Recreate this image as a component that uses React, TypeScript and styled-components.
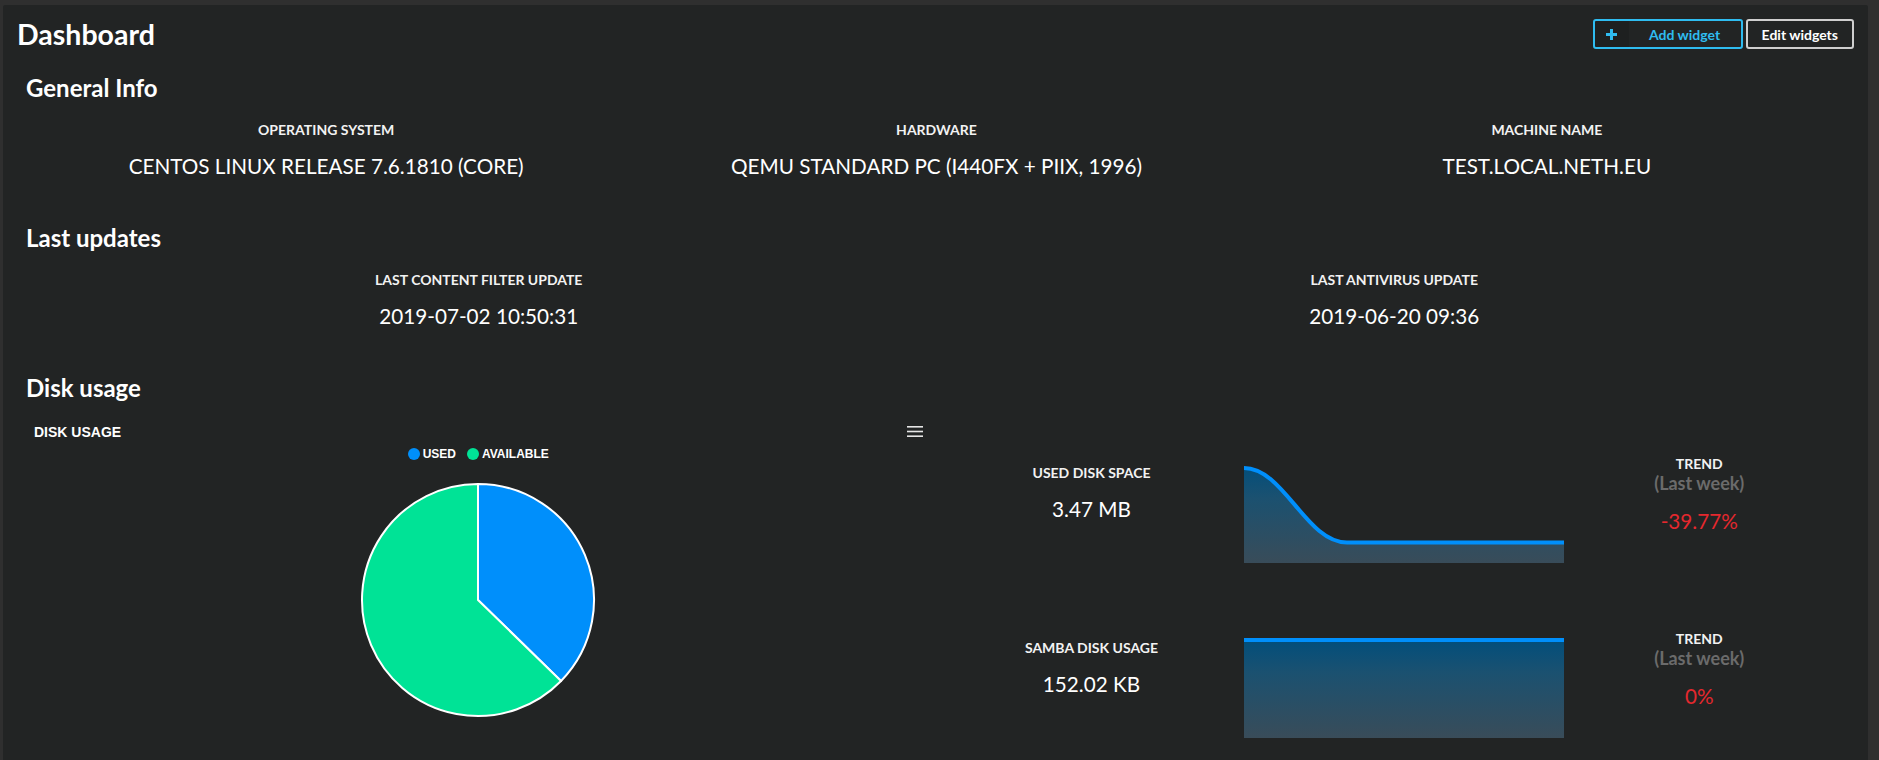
import React from "react";
import styled, { createGlobalStyle } from "styled-components";

const GlobalStyle = createGlobalStyle`
  html, body {
    margin: 0;
    padding: 0;
    height: 100%;
    overflow: hidden;
    background: #2f2f2f;
  }
  body {
    font-family: "Lato", "Liberation Sans", sans-serif;
    color: #ffffff;
  }
  #root { height: 100%; }
  * { box-sizing: border-box; }
`;

const Page = styled.div`
  height: 100vh;
  padding: 5px 11px 0 3px;
`;

const Panel = styled.main`
  height: 100%;
  background: #222424;
  border-radius: 2px 2px 0 0;
  overflow: hidden;
`;

const Header = styled.header`
  display: flex;
  align-items: center;
  justify-content: space-between;
  padding: 12px 14px 0 14px;
`;

const PageTitle = styled.h1`
  margin: 0;
  font-size: 28.5px;
  line-height: 34px;
  font-weight: 700;
  color: #ffffff;
`;

const Actions = styled.div`
  display: flex;
  gap: 3px;
`;

const AddButton = styled.button`
  display: flex;
  align-items: stretch;
  width: 150px;
  height: 30px;
  padding: 0;
  border: 2px solid #2fbcf0;
  border-radius: 3px;
  background: transparent;
  color: #2fbcf0;
  font-family: inherit;
  font-size: 14px;
  font-weight: 700;
  overflow: hidden;
  cursor: pointer;
`;

const IconCell = styled.span`
  width: 34px;
  display: flex;
  align-items: center;
  justify-content: center;
  background: rgba(0, 0, 0, 0.1);
`;

const ButtonLabel = styled.span`
  flex: 1;
  display: flex;
  align-items: center;
  justify-content: center;
`;

const EditButton = styled.button`
  height: 30px;
  padding: 0 14px;
  border: 2px solid #cfcfcf;
  border-radius: 3px;
  background: transparent;
  color: #ffffff;
  font-family: inherit;
  font-size: 14px;
  font-weight: 700;
  cursor: pointer;
`;

const Content = styled.div`
  padding: 0 16px 0 18px;
`;

const Section = styled.section<{ $top: number }>`
  margin-top: ${(p) => p.$top}px;
`;

const SectionTitle = styled.h2`
  margin: 0 0 19px 5px;
  font-size: 24px;
  line-height: 29px;
  font-weight: 700;
  color: #ffffff;
`;

const InfoGrid = styled.div<{ $cols: number }>`
  display: grid;
  grid-template-columns: repeat(${(p) => p.$cols}, minmax(0, 1fr));
`;

const InfoItem = styled.div`
  text-align: center;
`;

const Label = styled.div`
  font-size: 14px;
  line-height: 17px;
  font-weight: 700;
  color: #f2f2f2;
  text-transform: uppercase;
`;

const Value = styled.div`
  margin-top: 16px;
  font-size: 20.7px;
  line-height: 24px;
  font-weight: 400;
  color: #ffffff;
`;

const DiskRow = styled.div`
  display: grid;
  grid-template-columns: minmax(0, 1fr) minmax(0, 1fr);
`;

const ChartCard = styled.div`
  padding: 1px 14px 0 13px;
  font-family: "Liberation Sans", Helvetica, Arial, sans-serif;
`;

const ChartHeader = styled.div`
  display: flex;
  justify-content: space-between;
  align-items: flex-start;
  height: 20px;
`;

const ChartTitle = styled.div`
  font-size: 14px;
  line-height: 20px;
  font-weight: 700;
  color: #ffffff;
`;

const MenuIcon = styled.svg`
  margin-top: 4px;
  display: block;
`;

const Legend = styled.div`
  display: flex;
  justify-content: center;
  gap: 11px;
  margin-top: 4px;
  height: 16px;
`;

const LegendItem = styled.span`
  display: inline-flex;
  align-items: center;
  gap: 3px;
  font-size: 12px;
  line-height: 16px;
  font-weight: 700;
  color: #ffffff;
`;

const LegendDot = styled.span<{ $color: string }>`
  width: 12px;
  height: 12px;
  border-radius: 50%;
  background: ${(p) => p.$color};
`;

const PieWrap = styled.div`
  display: flex;
  justify-content: center;
  margin-top: 20px;
`;

const StatsColumn = styled.div`
  padding-top: 34px;
`;

const StatRow = styled.div`
  display: grid;
  grid-template-columns: 310px 300px minmax(0, 1fr);
  height: 175px;
  align-items: start;
`;

const StatBlock = styled.div`
  text-align: center;
  padding-top: 9px;
`;

const Sparkline = styled.svg`
  display: block;
  margin: 8px 0 0 -3px;
  overflow: visible;
`;

const TrendBlock = styled.div`
  text-align: center;
`;

const TrendTitle = styled.div`
  font-size: 14px;
  line-height: 17px;
  font-weight: 700;
  color: #f2f2f2;
`;

const TrendSub = styled.div`
  font-size: 18px;
  line-height: 22px;
  font-weight: 700;
  color: #6b6b6b;
`;

const TrendValue = styled.div`
  margin-top: 15px;
  font-size: 20.7px;
  line-height: 24px;
  color: #e5282e;
`;

const BLUE = "#008ffb";
const GREEN = "#00e396";

function Pie() {
  const c = 118;
  const r = 116;
  const used = 0.373;
  const a = used * Math.PI * 2;
  const ex = c + r * Math.sin(a);
  const ey = c - r * Math.cos(a);
  return (
    <svg width="236" height="236" viewBox="0 0 236 236">
      <path
        d={`M${c},${c} L${c},${c - r} A${r},${r} 0 0 1 ${ex},${ey} Z`}
        fill={BLUE}
        stroke="#ffffff"
        strokeWidth="2"
        strokeLinejoin="round"
      />
      <path
        d={`M${c},${c} L${ex},${ey} A${r},${r} 0 1 1 ${c},${c - r} Z`}
        fill={GREEN}
        stroke="#ffffff"
        strokeWidth="2"
        strokeLinejoin="round"
      />
    </svg>
  );
}

function Spark({ id, line }: { id: string; line: string }) {
  return (
    <Sparkline width="320" height="100" viewBox="0 0 320 100">
      <defs>
        <linearGradient id={id} x1="0" y1="0" x2="0" y2="100" gradientUnits="userSpaceOnUse">
          <stop offset="0" stopColor="#004e7c" />
          <stop offset="0.35" stopColor="#1b5170" />
          <stop offset="1" stopColor="#394c59" />
        </linearGradient>
      </defs>
      <path d={`${line} L320,100 L0,100 Z`} fill={`url(#${id})`} />
      <path d={line} fill="none" stroke={BLUE} strokeWidth="4" />
    </Sparkline>
  );
}

const stats = [
  {
    label: "Used disk space",
    value: "3.47 MB",
    trend: "-39.77%",
    line: "M0,5 C40,5 62,79.5 103,79.5 L320,79.5",
  },
  {
    label: "Samba disk usage",
    value: "152.02 KB",
    trend: "0%",
    line: "M0,2 L320,2",
  },
];

export default function App() {
  return (
    <>
      <GlobalStyle />
      <Page>
        <Panel>
          <Header>
            <PageTitle>Dashboard</PageTitle>
            <Actions>
              <AddButton>
                <IconCell>
                  <svg width="11" height="11" viewBox="0 0 11 11">
                    <rect x="4" y="0" width="3" height="11" fill="#2fbcf0" />
                    <rect x="0" y="4" width="11" height="3" fill="#2fbcf0" />
                  </svg>
                </IconCell>
                <ButtonLabel>Add widget</ButtonLabel>
              </AddButton>
              <EditButton>Edit widgets</EditButton>
            </Actions>
          </Header>
          <Content>
            <Section $top={22}>
              <SectionTitle>General Info</SectionTitle>
              <InfoGrid $cols={3}>
                <InfoItem>
                  <Label>Operating system</Label>
                  <Value>CENTOS LINUX RELEASE 7.6.1810 (CORE)</Value>
                </InfoItem>
                <InfoItem>
                  <Label>Hardware</Label>
                  <Value>QEMU STANDARD PC (I440FX + PIIX, 1996)</Value>
                </InfoItem>
                <InfoItem>
                  <Label>Machine name</Label>
                  <Value>TEST.LOCAL.NETH.EU</Value>
                </InfoItem>
              </InfoGrid>
            </Section>
            <Section $top={45}>
              <SectionTitle>Last updates</SectionTitle>
              <InfoGrid $cols={2}>
                <InfoItem>
                  <Label>Last content filter update</Label>
                  <Value>2019-07-02 10:50:31</Value>
                </InfoItem>
                <InfoItem>
                  <Label>Last antivirus update</Label>
                  <Value>2019-06-20 09:36</Value>
                </InfoItem>
              </InfoGrid>
            </Section>
            <Section $top={45}>
              <SectionTitle>Disk usage</SectionTitle>
              <DiskRow>
                <ChartCard>
                  <ChartHeader>
                    <ChartTitle>DISK USAGE</ChartTitle>
                    <MenuIcon width="16" height="11" viewBox="0 0 16 11">
                      <rect x="0" y="0" width="16" height="1.6" fill="#e6e6e6" />
                      <rect x="0" y="4.7" width="16" height="1.6" fill="#e6e6e6" />
                      <rect x="0" y="9.4" width="16" height="1.6" fill="#e6e6e6" />
                    </MenuIcon>
                  </ChartHeader>
                  <Legend>
                    <LegendItem>
                      <LegendDot $color={BLUE} />
                      USED
                    </LegendItem>
                    <LegendItem>
                      <LegendDot $color={GREEN} />
                      AVAILABLE
                    </LegendItem>
                  </Legend>
                  <PieWrap>
                    <Pie />
                  </PieWrap>
                </ChartCard>
                <StatsColumn>
                  {stats.map((s, i) => (
                    <StatRow key={s.label}>
                      <StatBlock>
                        <Label>{s.label}</Label>
                        <Value>{s.value}</Value>
                      </StatBlock>
                      <Spark id={`spark-${i}`} line={s.line} />
                      <TrendBlock>
                        <TrendTitle>TREND</TrendTitle>
                        <TrendSub>(Last week)</TrendSub>
                        <TrendValue>{s.trend}</TrendValue>
                      </TrendBlock>
                    </StatRow>
                  ))}
                </StatsColumn>
              </DiskRow>
            </Section>
          </Content>
        </Panel>
      </Page>
    </>
  );
}
